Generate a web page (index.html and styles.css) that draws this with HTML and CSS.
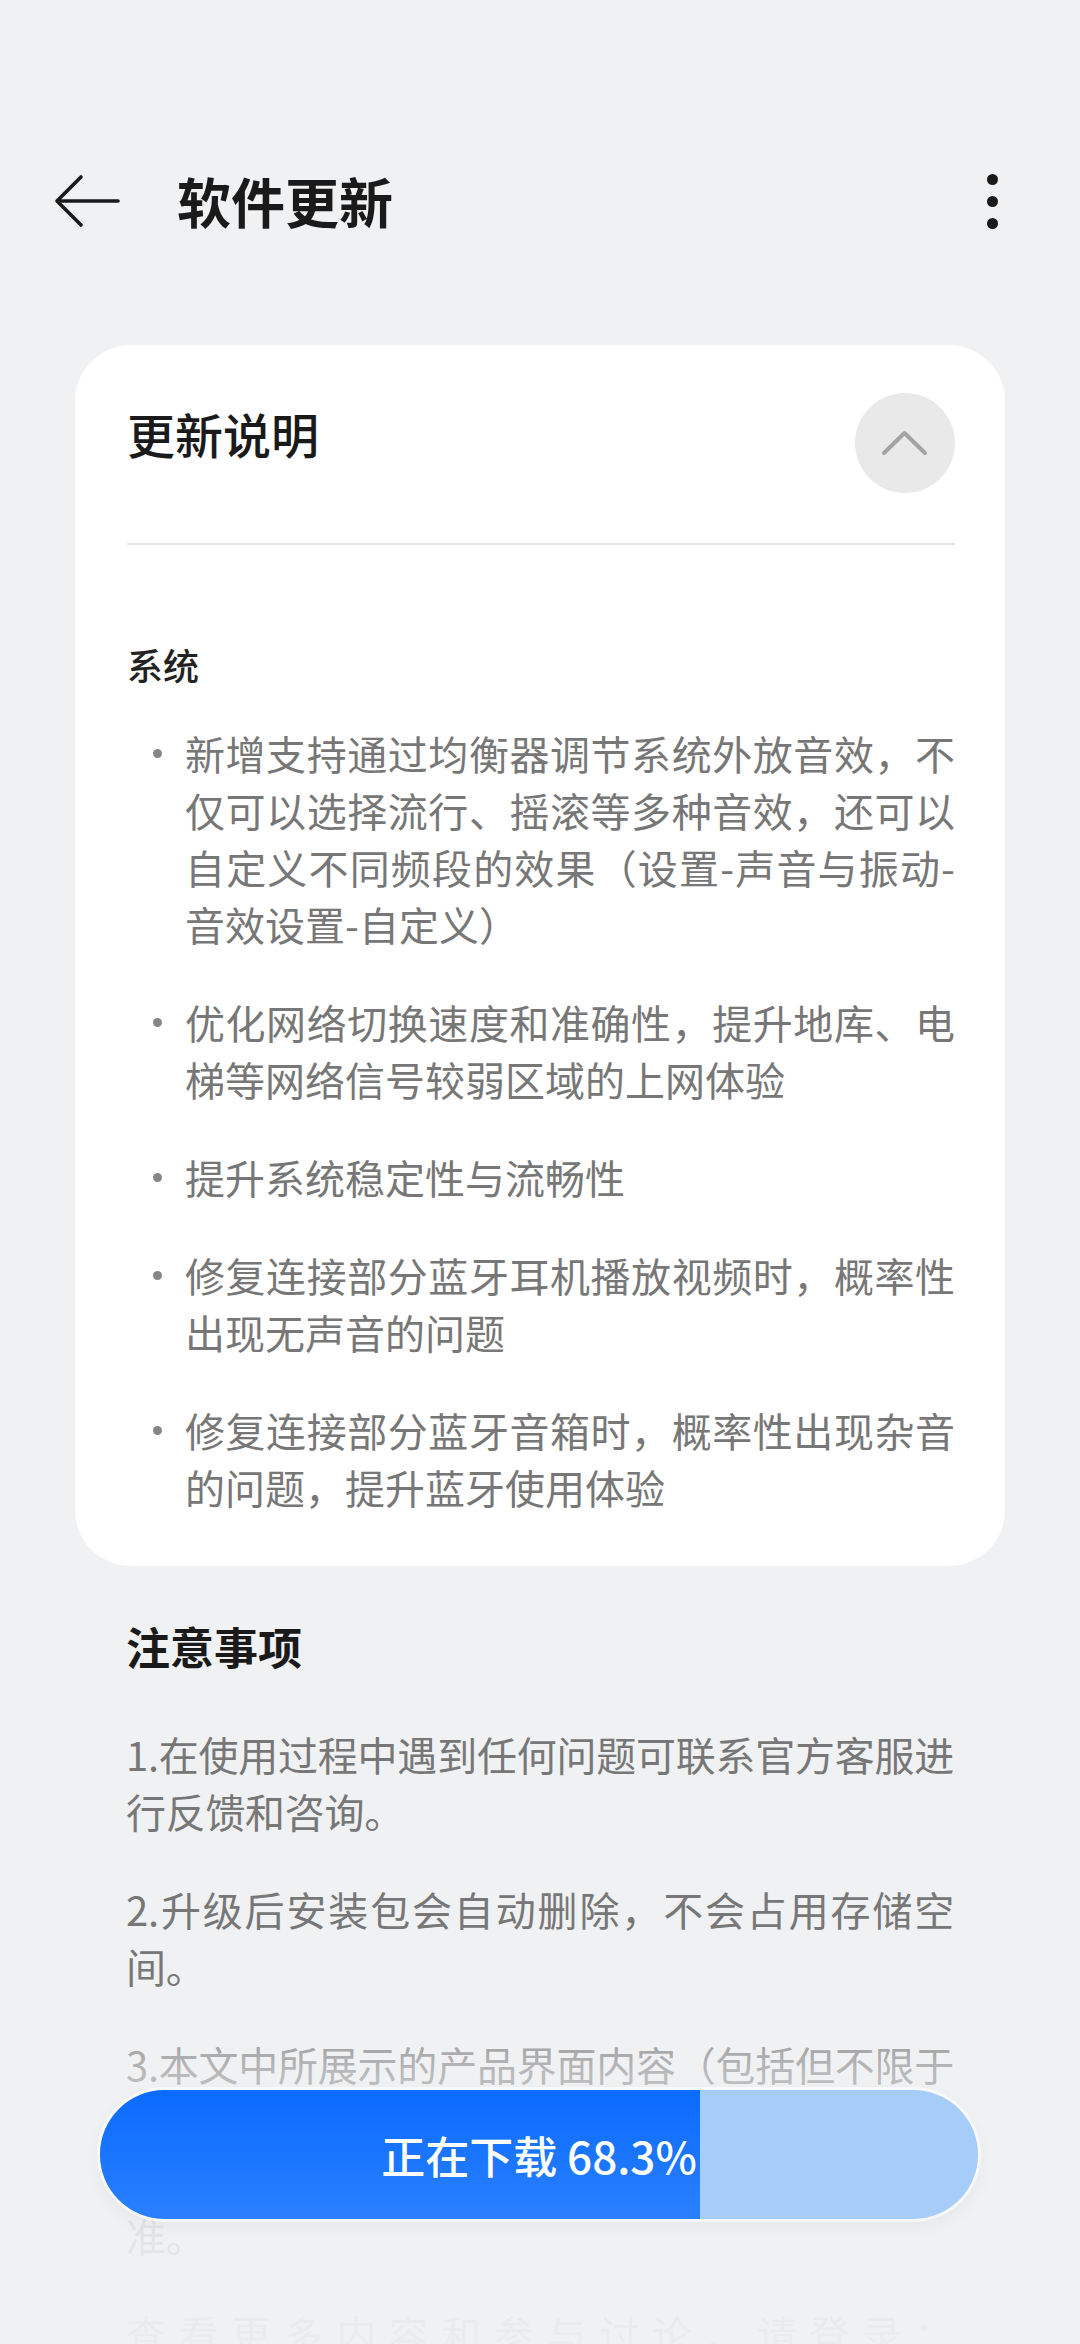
FILE: index.html
```html
<!DOCTYPE html>
<html lang="zh-CN">
<head>
  <meta charset="UTF-8" />
  <meta name="viewport" content="width=device-width, initial-scale=1.0"/>
  <title>软件更新</title>
  <link rel="stylesheet" href="styles.css">
</head>
<body>

<header class="topbar">
  <svg class="back" viewBox="0 0 70 60" fill="none" stroke="#1a1a1a" stroke-width="3.6" stroke-linecap="round" stroke-linejoin="round">
    <path d="M66 30H6"/>
    <path d="M29 6L5 30l24 24"/>
  </svg>
  <h1>软件更新</h1>
  <div class="more"><span></span><span></span><span></span></div>
</header>

<section class="card">
  <div class="card-head">
    <h2>更新说明</h2>
    <div class="toggle">
      <svg viewBox="0 0 100 100" fill="none" stroke="#a3a3a3" stroke-width="4" stroke-linecap="round" stroke-linejoin="round">
        <path d="M29 60L49.5 40 70 60"/>
      </svg>
    </div>
  </div>
  <div class="divider"></div>

  <div class="label">系统</div>
  <ul class="changes">
    <li><span>新增支持通过均衡器调节系统外放音效，不仅可以选择流行、摇滚等多种音效，还可以自定义不同频段的效果（设置-声音与振动-音效设置-自定义）</span></li>
    <li><span>优化网络切换速度和准确性，提升地库、电梯等网络信号较弱区域的上网体验</span></li>
    <li><span>提升系统稳定性与流畅性</span></li>
    <li><span>修复连接部分蓝牙耳机播放视频时，概率性出现无声音的问题</span></li>
    <li><span>修复连接部分蓝牙音箱时，概率性出现杂音的问题，提升蓝牙使用体验</span></li>
  </ul>
</section>

<section class="notes">
  <h3>注意事项</h3>
  <p>1.在使用过程中遇到任何问题可联系官方客服进行反馈和咨询。</p>
  <p>2.升级后安装包会自动删除，不会占用存储空间。</p>
  <p>3.本文中所展示的产品界面内容（包括但不限于图标、功能、界面布局、文字描述等）仅供参考，实际效果请以正式发布的产品界面显示为准。</p>
  <p>查看更多内容和参与讨论，请登录：https://consumer.huawei.com/cn/support/</p>
</section>

<div class="fade"></div>

<div class="download">
  <div class="bar" style="width: 68.3%"></div>
  <div class="text">正在下载 68.3%</div>
</div>

</body>
</html>
```

FILE: styles.css
```css
* {
  box-sizing: border-box;
}

body {
  margin: 0;
  width: 1080px;
  height: 2344px;
  overflow: hidden;
  position: relative;
  background: #f0f1f3;
  font-family: "Noto Sans CJK SC", "Noto Sans", sans-serif;
  color: #1a1a1a;
}

.topbar {
  display: flex;
  align-items: center;
  height: 100px;
  margin-top: 151px;
  padding: 0 78px 0 52px;
}

.back {
  width: 70px;
  height: 60px;
  flex: none;
}

.topbar h1 {
  flex: 1;
  margin: 0 0 0 55px;
  font-size: 54px;
  font-weight: 700;
  line-height: 1;
}

.more {
  display: flex;
  flex-direction: column;
  align-items: center;
  gap: 11px;
  width: 20px;
}

.more span {
  width: 11px;
  height: 11px;
  border-radius: 50%;
  background: #1a1a1a;
}

.card {
  margin: 94px 75px 0;
  padding: 48px 50px 50px 52px;
  background: #fff;
  border-radius: 56px;
}

.card-head {
  display: flex;
  justify-content: space-between;
  align-items: flex-start;
  height: 100px;
}

.card-head h2 {
  margin: 9px 0 0;
  font-size: 48px;
  line-height: 62px;
  font-weight: 500;
}

.toggle {
  width: 100px;
  height: 100px;
  border-radius: 50%;
  background: #e9e9e9;
}

.toggle svg {
  display: block;
  width: 100px;
  height: 100px;
}

.divider {
  height: 2px;
  margin-top: 50px;
  background: #e6e6e6;
}

.label {
  margin-top: 95px;
  font-size: 36px;
  line-height: 48px;
  font-weight: 500;
  color: #222;
}

.changes {
  list-style: none;
  margin: 37px 0 0;
  padding: 0;
}

.changes li {
  display: flex;
  font-size: 40px;
  line-height: 57px;
  color: #777;
}

.changes li + li {
  margin-top: 41px;
}

.changes li::before {
  content: "";
  flex: none;
  width: 9px;
  height: 9px;
  margin: 24px 23px 0 26px;
  border-radius: 50%;
  background: #868686;
}

.changes li span {
  flex: 1;
  min-width: 0;
  text-align: justify;
}

.notes {
  padding: 0 126px;
}

.notes h3 {
  margin: 50px 0 0;
  font-size: 44px;
  line-height: 60px;
  font-weight: 700;
}

.notes p {
  margin: 41px 0 0;
  font-size: 40px;
  line-height: 57px;
  letter-spacing: -0.3px;
  color: #777;
  text-align: justify;
}

.notes h3 + p {
  margin-top: 50px;
}

.fade {
  position: absolute;
  left: 0;
  right: 0;
  bottom: 0;
  height: 360px;
  background: linear-gradient(to bottom,
    rgba(240, 241, 243, 0) 0%,
    rgba(240, 241, 243, 0.55) 25%,
    rgba(240, 241, 243, 0.88) 65%,
    rgba(240, 241, 243, 0.96) 100%);
}

.download {
  position: absolute;
  left: 100px;
  top: 2090px;
  width: 878px;
  height: 129px;
  display: grid;
  border-radius: 65px;
  overflow: hidden;
  background: #a6cdf7;
  box-shadow: 0 0 0 3px rgba(255, 255, 255, 0.6), 0 6px 20px rgba(0, 0, 0, 0.05);
}

.download .bar,
.download .text {
  grid-area: 1 / 1;
}

.download .bar {
  height: 100%;
  background: linear-gradient(to bottom, #0a6bff, #2a80ff);
}

.download .text {
  align-self: center;
  justify-self: center;
  font-size: 44px;
  font-weight: 500;
  color: #fff;
}
```
